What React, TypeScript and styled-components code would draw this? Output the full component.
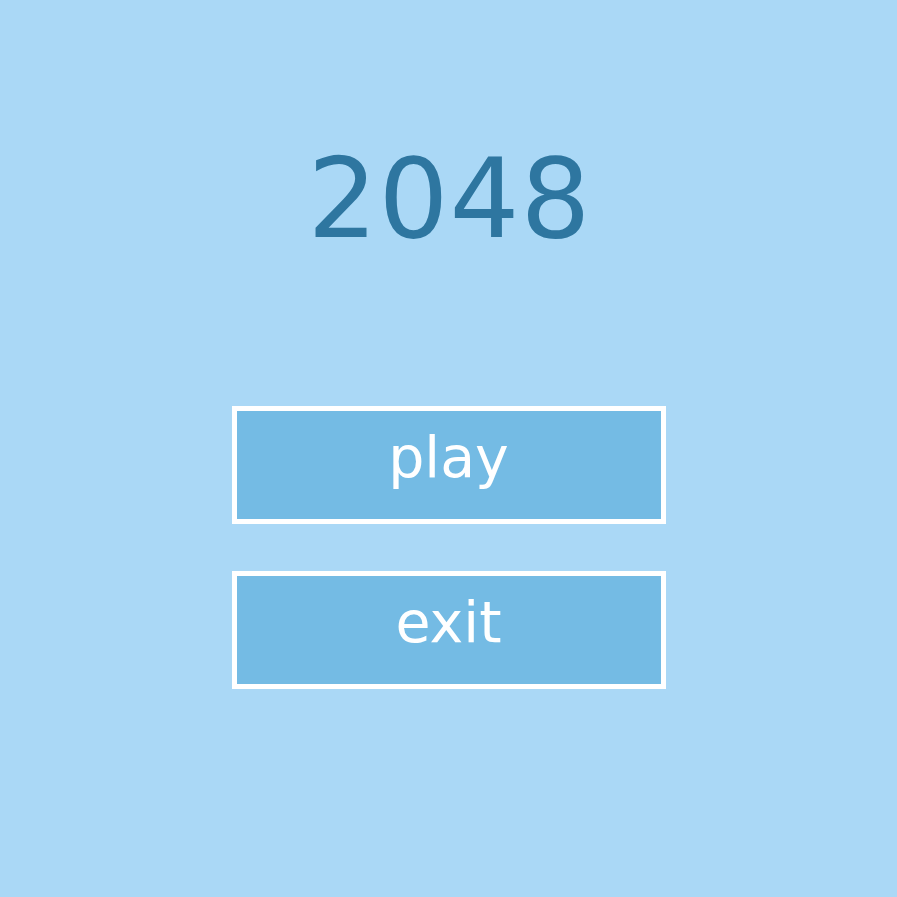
import React from "react";
import styled, { createGlobalStyle } from "styled-components";

const Global = createGlobalStyle`
  html, body { margin: 0; padding: 0; background: #aad8f6; }
  body { font-family: "DejaVu Sans", "Liberation Sans", sans-serif; }
`;

const Screen = styled.main`
  width: 897px;
  height: 897px;
  box-sizing: border-box;
  background: #aad8f6;
  display: flex;
  flex-direction: column;
  align-items: center;
  padding-top: 144px;
`;

const Title = styled.h1`
  margin: 0 0 152px 2px;
  font-family: "DejaVu Sans", sans-serif;
  font-weight: 400;
  font-size: 110px;
  line-height: 1;
  color: #2e76a0;
  letter-spacing: 1px;
`;

const Menu = styled.nav`
  display: flex;
  flex-direction: column;
  gap: 47px;
`;

const MenuButton = styled.button`
  width: 434px;
  height: 118px;
  box-sizing: border-box;
  border: 5px solid #ffffff;
  background: #74bbe4;
  color: #ffffff;
  font-family: "DejaVu Sans", sans-serif;
  font-size: 57px;
  line-height: 1;
  display: flex;
  align-items: center;
  justify-content: center;
  padding: 0 0 16px 0;
  cursor: pointer;
`;

export default function App() {
  return (
    <>
      <Global />
      <Screen>
        <Title>2048</Title>
        <Menu>
          <MenuButton>play</MenuButton>
          <MenuButton>exit</MenuButton>
        </Menu>
      </Screen>
    </>
  );
}
